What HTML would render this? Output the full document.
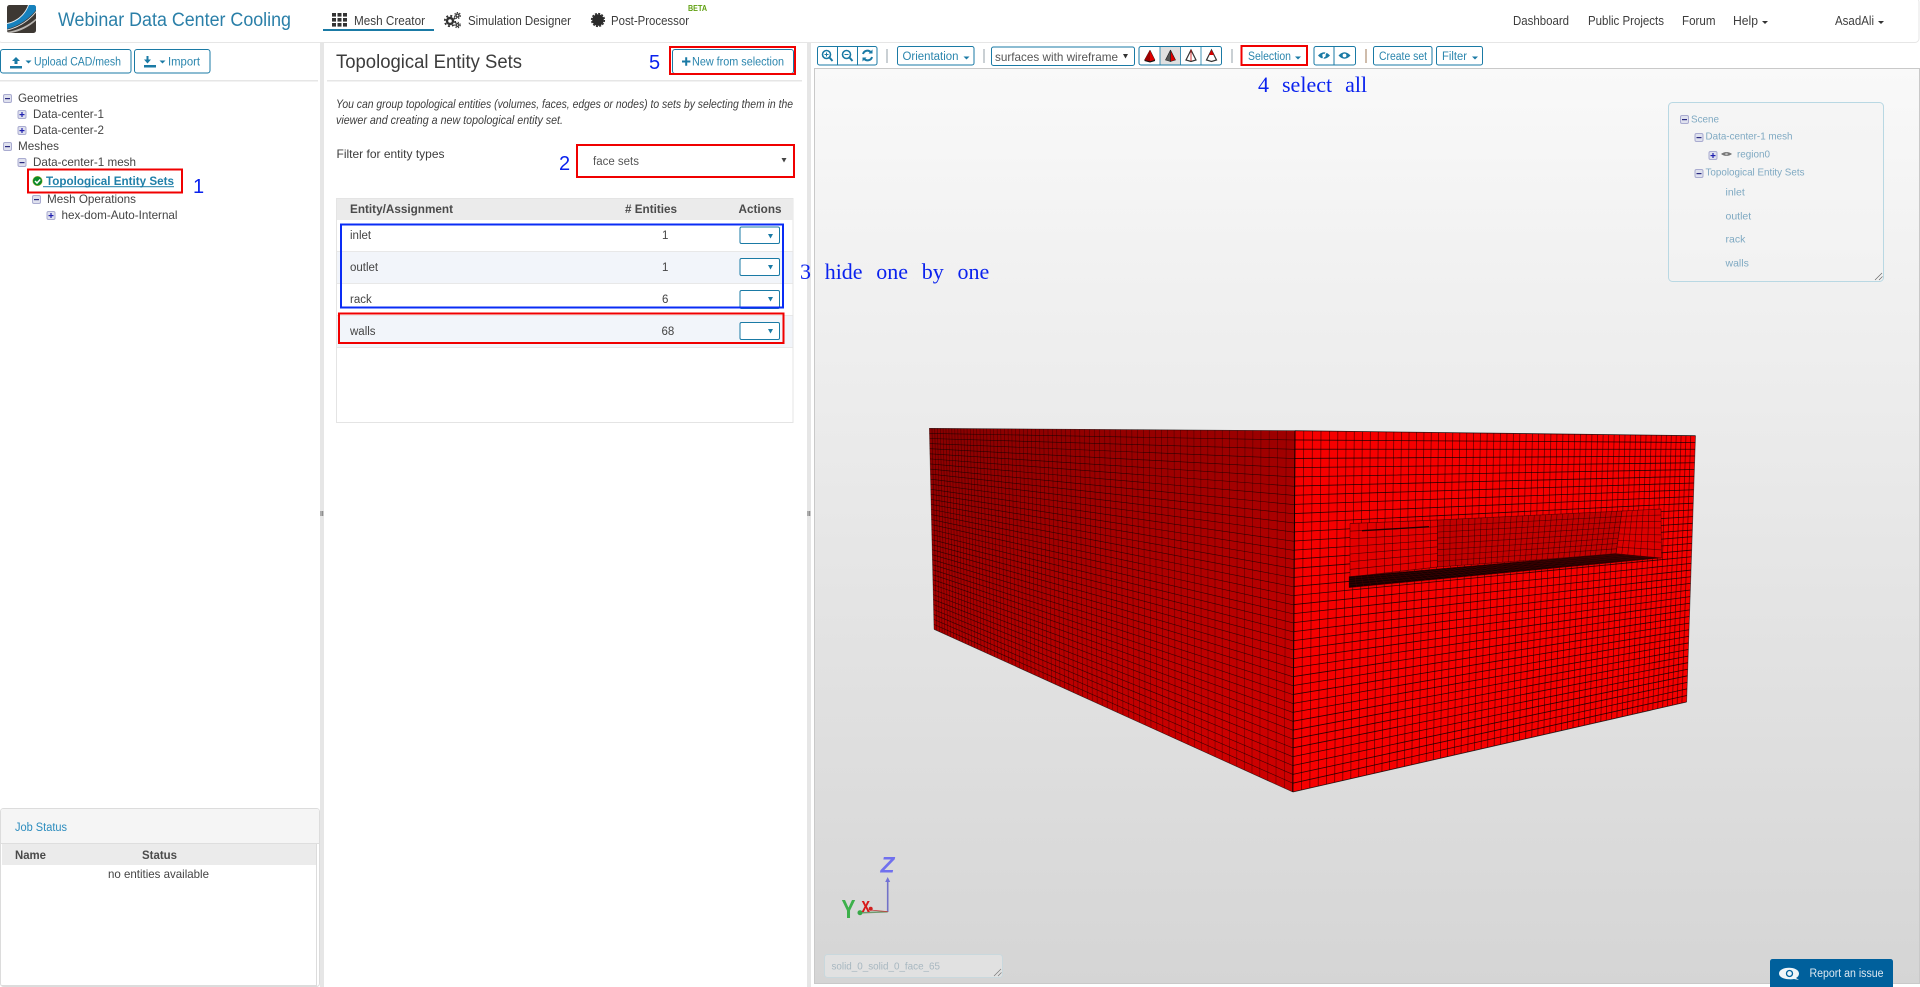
<!DOCTYPE html>
<html lang="en">
<head>
<meta charset="utf-8">
<title>Webinar Data Center Cooling</title>
<style>
html,body{margin:0;padding:0;background:#fff;width:1920px;height:987px;overflow:hidden}
svg{display:block}
text{font-family:"Liberation Sans",Arial,sans-serif;font-size:12px;fill:#3a3a3a}
.nav{font-size:12.5px;fill:#3d3d3d}
.title{font-size:19px;fill:#2a7fa8}
.btn{font-size:11.5px;fill:#2a85ad}
.tree{font-size:12px;fill:#444}
.th{font-size:11.5px;font-weight:bold;fill:#4a4a4a}
.td{font-size:11.5px;fill:#444}
.sc{font-size:10.5px;fill:#7fa9c2}
.ann{font-size:20px;fill:#0a22ee}
.ser{font-family:"Liberation Serif",serif;font-size:22px;fill:#0a22ee}
.b{fill:#fff;stroke:#1a7aa5;stroke-width:1}
.sep{stroke:#b9c0c6;stroke-width:1.5}
.red{fill:none;stroke:#f00000;stroke-width:2}
.blue{fill:none;stroke:#0a2cf5;stroke-width:2}
.ic{fill:#1a7aa5}
.ics{fill:none;stroke:#1a7aa5;stroke-width:1.6}
</style>
</head>
<body>
<svg id="page" xmlns="http://www.w3.org/2000/svg" width="1920" height="987" viewBox="0 0 1920 987">
<defs>
<linearGradient id="vg" x1="0" y1="0" x2="0" y2="1"><stop offset="0" stop-color="#f9f9f9"/><stop offset="1" stop-color="#d5d5d5"/></linearGradient>
<linearGradient id="lf" x1="0" y1="0" x2="0.35" y2="1"><stop offset="0" stop-color="#880000"/><stop offset="1" stop-color="#cc0000"/></linearGradient>
<g id="minus"><rect x="0.5" y="0.5" width="8" height="8" rx="1.5" fill="#dfe1ee" stroke="#a9abd0"/><rect x="2" y="4" width="5" height="1.2" fill="#2a2a80"/></g>
<g id="plus"><rect x="0.5" y="0.5" width="8" height="8" rx="1.5" fill="#dfe1ee" stroke="#a9abd0"/><rect x="2" y="4" width="5" height="1.2" fill="#2222b0"/><rect x="3.9" y="2" width="1.2" height="5" fill="#2222b0"/></g>
<path id="caret" d="M0 0h6l-3 3z"/>
<path id="drop" d="M0 0h5l-2.5 4.5z"/>
<clipPath id="logoclip"><rect x="7" y="5" width="29" height="28" rx="2.5"/></clipPath>
</defs>

<!-- navbar -->
<rect x="-2" y="-2" width="1921" height="44.5" rx="4" fill="#fff" stroke="#e6e6e6"/>
<g clip-path="url(#logoclip)">
<rect x="7" y="5" width="29" height="28" fill="#3d3833"/>
<path d="M7 23C15 21.500 24 16 28 5H30C26 17 16 23 7 24.500Z" fill="#e8eef2"/>
<path d="M7 24C16 22.500 25 16 29 5H36V10C30 18 19 26 7 29Z" fill="#1681bd"/>
<path d="M7 29.500C19 27 30 19 36 11V12.500C30 20 19 28 7 30.500Z" fill="#d8dde0"/>
<path d="M7 32C18 30.500 29 25 36 18.500V20.500C29 27 20 31.500 11 33H7Z" fill="#b9b6b2"/>
</g>
<text class="title" x="58" y="26" textLength="233" lengthAdjust="spacingAndGlyphs">Webinar Data Center Cooling</text>
<g fill="#333">
<rect x="332" y="13" width="4" height="3.6"/><rect x="337.5" y="13" width="4" height="3.6"/><rect x="343" y="13" width="4" height="3.6"/>
<rect x="332" y="18" width="4" height="3.6"/><rect x="337.5" y="18" width="4" height="3.6"/><rect x="343" y="18" width="4" height="3.6"/>
<rect x="332" y="23" width="4" height="3.6"/><rect x="337.5" y="23" width="4" height="3.6"/><rect x="343" y="23" width="4" height="3.6"/>
</g>
<text class="nav" x="354" y="25" textLength="71" lengthAdjust="spacingAndGlyphs">Mesh Creator</text>
<rect x="323" y="29" width="111" height="2" fill="#1a7aa5"/>
<g fill="none" stroke="#333">
<circle cx="450" cy="21" r="3" stroke-width="2.4"/><circle cx="450" cy="21" r="5.2" stroke-width="1.8" stroke-dasharray="2 2.1"/>
<circle cx="457.5" cy="15.5" r="1.6" stroke-width="1.4"/><circle cx="457.5" cy="15.5" r="3" stroke-width="1.1" stroke-dasharray="1.3 1.3"/>
<circle cx="457.5" cy="25" r="1.4" stroke-width="1.3"/><circle cx="457.5" cy="25" r="2.8" stroke-width="1" stroke-dasharray="1.3 1.3"/>
</g>
<text class="nav" x="468" y="25" textLength="103" lengthAdjust="spacingAndGlyphs">Simulation Designer</text>
<circle cx="598" cy="20" r="5.8" fill="#2a2a2a"/><circle cx="598" cy="20" r="6.4" fill="none" stroke="#2a2a2a" stroke-width="1.4" stroke-dasharray="2 1.35"/>
<text class="nav" x="611" y="25" textLength="78" lengthAdjust="spacingAndGlyphs">Post-Processor</text>
<text x="688" y="11" textLength="19" lengthAdjust="spacingAndGlyphs" style="font-size:8px;font-weight:bold;fill:#5fa010">BETA</text>
<text class="nav" x="1513" y="25" textLength="56" lengthAdjust="spacingAndGlyphs">Dashboard</text>
<text class="nav" x="1588" y="25" textLength="76" lengthAdjust="spacingAndGlyphs">Public Projects</text>
<text class="nav" x="1682" y="25" textLength="33.500" lengthAdjust="spacingAndGlyphs">Forum</text>
<text class="nav" x="1733" y="25" textLength="25" lengthAdjust="spacingAndGlyphs">Help</text>
<use href="#caret" x="1762" y="21" fill="#333"/>
<text class="nav" x="1835" y="25" textLength="39" lengthAdjust="spacingAndGlyphs">AsadAli</text>
<use href="#caret" x="1878" y="21" fill="#333"/>

<!-- dividers -->
<rect x="320" y="43" width="4" height="944" fill="#e6e6e6"/>
<rect x="807" y="43" width="4" height="944" fill="#e6e6e6"/>
<g stroke="#555" stroke-width="0.8"><path d="M321 511v5M322.800 511v5M808 511v5M809.800 511v5"/></g>

<!-- left panel -->
<rect x="0.500" y="49.500" width="130.500" height="23.500" rx="2.500" class="b"/>
<rect x="134.500" y="49.500" width="75.500" height="23.500" rx="2.500" class="b"/>
<g class="ic">
<path d="M16 57l4 4h-2.500v3h-3v-3H12zM10 66h12v2.500H10z"/>
<use href="#caret" x="25.500" y="60.500"/>
<path d="M148.500 56v3.500H151l-3.500 4-3.500-4h2.500V56zM144 65h12v2.500h-12z" />
<use href="#caret" x="159.500" y="60.500"/>
</g>
<text class="btn" x="34" y="65.500" textLength="87" lengthAdjust="spacingAndGlyphs">Upload CAD/mesh</text>
<text class="btn" x="168" y="65.500" textLength="32" lengthAdjust="spacingAndGlyphs">Import</text>
<rect x="0" y="80" width="318" height="1.500" fill="#e6e6e6"/>

<use href="#minus" x="3" y="94"/><text class="tree" x="18" y="102" textLength="60" lengthAdjust="spacingAndGlyphs">Geometries</text>
<use href="#plus" x="17.500" y="110"/><text class="tree" x="33" y="118" textLength="71" lengthAdjust="spacingAndGlyphs">Data-center-1</text>
<use href="#plus" x="17.500" y="126"/><text class="tree" x="33" y="134" textLength="71" lengthAdjust="spacingAndGlyphs">Data-center-2</text>
<use href="#minus" x="3" y="142"/><text class="tree" x="18" y="150" textLength="41" lengthAdjust="spacingAndGlyphs">Meshes</text>
<use href="#minus" x="17.500" y="158"/><text class="tree" x="33" y="166" textLength="103" lengthAdjust="spacingAndGlyphs">Data-center-1 mesh</text>
<circle cx="37.500" cy="181" r="4.800" fill="#0b8a2a" stroke="#c9c040" stroke-width="0.500"/>
<path d="M35 181l2 2 3.200-3.500" fill="none" stroke="#fff" stroke-width="1.500"/>
<text x="46" y="185" textLength="128" lengthAdjust="spacingAndGlyphs" style="font-size:12px;font-weight:bold;fill:#1f7fa8">Topological Entity Sets</text>
<rect x="43" y="186.200" width="131" height="1" fill="#1f7fa8"/>
<rect x="28" y="169.500" width="154" height="23" class="red"/>
<text class="ann" x="193" y="193">1</text>
<use href="#minus" x="32" y="195"/><text class="tree" x="47" y="203" textLength="89" lengthAdjust="spacingAndGlyphs">Mesh Operations</text>
<use href="#plus" x="46.500" y="211"/><text class="tree" x="61.500" y="219" textLength="116" lengthAdjust="spacingAndGlyphs">hex-dom-Auto-Internal</text>

<!-- job status -->
<rect x="0.500" y="808.500" width="319" height="178" rx="3" fill="#fff" stroke="#dcdcdc"/>
<path d="M1 811a2 2 0 0 1 2-2h314a2 2 0 0 1 2 2v32H1z" fill="#f5f5f5"/>
<rect x="1" y="843" width="318" height="1" fill="#dedede"/>
<rect x="2" y="844" width="314" height="21" fill="#ebebeb"/>
<rect x="316" y="844" width="1" height="141" fill="#dcdcdc"/>
<rect x="2" y="985" width="315" height="1" fill="#dcdcdc"/>
<text x="15" y="831" textLength="52" lengthAdjust="spacingAndGlyphs" style="font-size:11.500px;fill:#2b8cbe">Job Status</text>
<text class="th" x="15" y="859" textLength="31" lengthAdjust="spacingAndGlyphs">Name</text>
<text class="th" x="142" y="859" textLength="35" lengthAdjust="spacingAndGlyphs">Status</text>
<text x="108" y="878" textLength="101" lengthAdjust="spacingAndGlyphs" style="font-size:12px;fill:#444">no entities available</text>

<!-- middle panel -->
<text x="336" y="68" textLength="186" lengthAdjust="spacingAndGlyphs" style="font-size:19px;fill:#3c3c3c">Topological Entity Sets</text>
<rect x="327" y="80" width="475" height="1.500" fill="#e6e6e6"/>
<text class="ann" x="649" y="69">5</text>
<rect x="672.500" y="49.500" width="121" height="24" rx="2.500" class="b"/>
<path d="M682 60.500h3.200v-3.200h2v3.200h3.200v2h-3.200v3.200h-2v-3.200H682z" class="ic"/>
<text class="btn" x="692" y="65.500" textLength="92" lengthAdjust="spacingAndGlyphs">New from selection</text>
<rect x="670" y="47" width="125" height="27" class="red"/>
<text x="336" y="108" textLength="457" lengthAdjust="spacingAndGlyphs" style="font-size:12px;font-style:italic;fill:#3c3c3c">You can group topological entities (volumes, faces, edges or nodes) to sets by selecting them in the</text>
<text x="336" y="124" textLength="227" lengthAdjust="spacingAndGlyphs" style="font-size:12px;font-style:italic;fill:#3c3c3c">viewer and creating a new topological entity set.</text>
<text x="336.500" y="158" textLength="108" lengthAdjust="spacingAndGlyphs" style="font-size:12px;fill:#3c3c3c">Filter for entity types</text>
<text class="ann" x="559" y="170">2</text>
<rect x="577" y="145" width="217" height="32" class="red"/>
<text x="593" y="165" textLength="46" lengthAdjust="spacingAndGlyphs" style="font-size:11.500px;fill:#555">face sets</text>
<use href="#drop" x="781.500" y="158" fill="#444"/>

<rect x="336.500" y="198.500" width="456.500" height="224" fill="#fff" stroke="#e4e4e4"/>
<rect x="337" y="199" width="456" height="21" fill="#ebebeb"/>
<rect x="337" y="252" width="455.500" height="31" fill="#f2f5fa"/>
<rect x="337" y="316" width="455.500" height="31" fill="#f2f5fa"/>
<g fill="#e8e8e8"><rect x="337" y="251" width="455.500" height="1"/><rect x="337" y="283" width="455.500" height="1"/><rect x="337" y="315" width="455.500" height="1"/><rect x="337" y="347" width="455.500" height="1"/></g>
<text class="th" x="350" y="213" textLength="103" lengthAdjust="spacingAndGlyphs">Entity/Assignment</text>
<text class="th" x="625" y="213" textLength="52" lengthAdjust="spacingAndGlyphs"># Entities</text>
<text class="th" x="738.500" y="213" textLength="43" lengthAdjust="spacingAndGlyphs">Actions</text>
<text class="td" x="350" y="239">inlet</text><text class="td" x="662" y="239">1</text>
<text class="td" x="350" y="271">outlet</text><text class="td" x="662" y="271">1</text>
<text class="td" x="350" y="303">rack</text><text class="td" x="662" y="303">6</text>
<text class="td" x="350" y="335">walls</text><text class="td" x="661.500" y="335">68</text>
<g>
<rect x="740" y="227" width="39.500" height="16.500" rx="1.500" class="b"/><rect x="740" y="258.500" width="39.500" height="17" rx="1.500" class="b"/><rect x="740" y="290.500" width="39.500" height="18" rx="1.500" class="b"/><rect x="740" y="322.500" width="39.500" height="17" rx="1.500" class="b"/>
<g class="ic"><use href="#drop" x="768" y="234"/><use href="#drop" x="768" y="265"/><use href="#drop" x="768" y="297"/><use href="#drop" x="768" y="329"/></g>
</g>
<rect x="341" y="224.500" width="442" height="83" class="blue"/>
<rect x="339" y="313.500" width="444.500" height="29.500" class="red"/>

<!-- toolbar -->
<rect x="817.500" y="46.500" width="59.500" height="18.500" rx="2" class="b"/>
<path d="M837.500 46.500v18.500M857.500 46.500v18.500" stroke="#1a7aa5"/>
<g class="ics">
<circle cx="826.500" cy="54.500" r="4"/><path d="M829.500 57.500l3 3.500" stroke-width="2"/><path d="M824.500 54.500h4M826.500 52.500v4" stroke-width="1"/>
<circle cx="846.500" cy="54.500" r="4"/><path d="M849.500 57.500l3 3.500" stroke-width="2"/><path d="M844.500 54.500h4" stroke-width="1"/>
<path d="M863 54a4.500 4.500 0 0 1 8-1.500M872 57a4.500 4.500 0 0 1-8 1.500" stroke-width="2"/>
</g>
<path d="M872.500 49.500v4h-4zM862.500 61.500v-4h4z" class="ic"/>
<path class="sep" d="M887 49v14M984 49v14M1232 49v14"/>
<path d="M1366 49v14" stroke="#bfa68f" stroke-width="1.500"/>
<rect x="897.500" y="46.500" width="76.500" height="18.500" rx="2" class="b"/>
<text class="btn" x="902.500" y="60" textLength="56" lengthAdjust="spacingAndGlyphs">Orientation</text>
<use href="#caret" x="963.500" y="56.500" class="ic"/>
<rect x="991.500" y="47" width="143" height="18.500" rx="2" class="b"/>
<text x="995" y="61" textLength="123" lengthAdjust="spacingAndGlyphs" style="font-size:12px;fill:#555">surfaces with wireframe</text>
<use href="#drop" x="1123" y="54" fill="#333"/>
<rect x="1139" y="46.500" width="82.500" height="18.500" rx="2" class="b"/>
<rect x="1160" y="47" width="20.500" height="17.500" fill="#e0e0e0"/>
<path d="M1160 46.500v18.500M1180.500 46.500v18.500M1201 46.500v18.500" stroke="#1a7aa5" stroke-width="0.800"/>
<path d="M1150 50l5 10-5 1.500-5.500-1.500z" fill="#e00000" stroke="#222" stroke-width="0.500"/><path d="M1150 50l-5.500 10 5.500 1.500z" fill="#a00000"/><path d="M1144.500 60.500l5.500 1.500 5-1.500" fill="none" stroke="#111" stroke-width="1"/>
<path d="M1170.500 50l5 10-5 1.500z" fill="#e00000" stroke="#222" stroke-width="0.600"/><path d="M1170.500 50l-5 10 5 1.500z" fill="#555" stroke="#222" stroke-width="0.600"/>
<path d="M1191 50l5 10-5 1.500-5-1.500z" fill="#fff" stroke="#333" stroke-width="1.200"/><path d="M1191 50v11" stroke="#c00" stroke-width="0.800"/>
<path d="M1211.500 50l5 10-5 1.500-5-1.500z" fill="#fff" stroke="#333" stroke-width="1.200"/><path d="M1211.500 50l2.500 5h-5z" fill="#d80000"/>
<rect x="1241.500" y="46" width="65.500" height="19" class="red"/>
<text class="btn" x="1248" y="60" textLength="43" lengthAdjust="spacingAndGlyphs">Selection</text>
<use href="#caret" x="1295" y="56.500" class="ic"/>
<rect x="1314" y="46.500" width="41.500" height="18.500" rx="2" class="b"/>
<path d="M1334 46.500v18.500" stroke="#1a7aa5"/>
<path d="M1318 55.500q6-6.500 12 0q-6 6.500-12 0z" class="ic"/><circle cx="1324" cy="55.500" r="1.700" fill="#fff"/><path d="M1327.500 50l-6 11" stroke="#fff" stroke-width="1.200"/>
<path d="M1338.500 55.500q6-6.500 12 0q-6 6.500-12 0z" class="ic"/><circle cx="1344.500" cy="55.500" r="1.900" fill="#fff"/>
<rect x="1373.500" y="46.500" width="58.500" height="18.500" rx="2" class="b"/>
<text class="btn" x="1379" y="60" textLength="48" lengthAdjust="spacingAndGlyphs">Create set</text>
<rect x="1436.500" y="46.500" width="46" height="18.500" rx="2" class="b"/>
<text class="btn" x="1442" y="60" textLength="25" lengthAdjust="spacingAndGlyphs">Filter</text>
<use href="#caret" x="1472" y="56.500" class="ic"/>

<!-- viewer -->
<rect x="814.500" y="68.500" width="1105" height="915" fill="url(#vg)" stroke="#c9c9c9"/>
<text class="ser" x="1258" y="92" style="word-spacing:7.500px">4 select all</text>
<text class="ser" x="800" y="279" style="word-spacing:8.200px">3 hide one by one</text>
<g id="mesh">
<polygon points="929.300,428.300 1295,430.700 1292.800,792 934,629.300" fill="url(#lf)"/>
<polygon points="1295,430.700 1695.500,435.700 1686.600,702 1292.800,792" fill="#f60000"/>
</g>

<!-- scene tree -->
<rect x="1668.500" y="102.500" width="215" height="179" rx="4" fill="#f4f4f4" fill-opacity="0.6" stroke="#b9d8e3"/>
<use href="#minus" x="1680" y="115"/><text class="sc" x="1691" y="122.500" textLength="28" lengthAdjust="spacingAndGlyphs">Scene</text>
<use href="#minus" x="1694.500" y="133"/><text class="sc" x="1705.500" y="139.500" textLength="87" lengthAdjust="spacingAndGlyphs">Data-center-1 mesh</text>
<use href="#plus" x="1708.500" y="151"/>
<path d="M1721 154q5.500-4 11 0q-5.500 4-11 0z" fill="#777"/><circle cx="1726.500" cy="154" r="1.300" fill="#bbb"/>
<text class="sc" x="1737" y="157.500" textLength="33" lengthAdjust="spacingAndGlyphs">region0</text>
<use href="#minus" x="1694.500" y="169"/><text class="sc" x="1705.500" y="175.500" textLength="99" lengthAdjust="spacingAndGlyphs">Topological Entity Sets</text>
<text class="sc" x="1725.500" y="195.500">inlet</text>
<text class="sc" x="1725.500" y="219.500">outlet</text>
<text class="sc" x="1725.500" y="242.500">rack</text>
<text class="sc" x="1725.500" y="266.500">walls</text>
<path d="M1875 280l7-7M1879 280l3.500-3.500" stroke="#666" stroke-width="0.700"/>

<!-- axes -->
<path d="M887.700 912V881" stroke="#7272c8" stroke-width="1.600" fill="none"/>
<path d="M887.700 877l2.500 5h-5z" fill="#7272d8"/>
<path d="M887.700 911.700L862 912.700" stroke="#6f9a6f" stroke-width="1.500"/>
<path d="M887.700 911.700L870 910" stroke="#c04040" stroke-width="0.800"/>
<circle cx="860" cy="912.700" r="2.500" fill="#38a848"/><circle cx="870.700" cy="908.700" r="2" fill="#d02020"/>
<text x="880.500" y="872.700" textLength="14" lengthAdjust="spacingAndGlyphs" style="font-size:22px;font-weight:bold;font-style:italic;fill:#7070ee">Z</text>
<text x="841.500" y="918" textLength="14" lengthAdjust="spacingAndGlyphs" style="font-size:26px;font-weight:bold;fill:#3cb04a">Y</text>
<text x="861.500" y="912" textLength="8.500" lengthAdjust="spacingAndGlyphs" style="font-size:20px;font-weight:bold;fill:#d81a1a">x</text>

<!-- hover label -->
<rect x="824.500" y="954.500" width="178" height="23" rx="3" fill="#e1e1e1" stroke="#c9d8dd"/>
<text x="831.500" y="969.500" textLength="108.500" lengthAdjust="spacingAndGlyphs" style="font-size:10.500px;fill:#a7b7c0">solid_0_solid_0_face_65</text>
<path d="M994 976l7-7M998 976l3.500-3.500" stroke="#777" stroke-width="0.700"/>

<!-- report -->
<path d="M1770 987v-25.500a2.500 2.500 0 0 1 2.500-2.500h118a2.500 2.500 0 0 1 2.500 2.500V987z" fill="#00609c"/>
<path d="M1779 973.500c0-3.500 4.500-5.800 10-5.800s10 2.300 10 5.800c0 2-1 3.500-3 4.500l3 2-5-1c-1.500.3-3.300.4-5 .3-5.500-.3-10-2.300-10-5.800z" fill="#f0f5f9"/>
<circle cx="1789.500" cy="973.500" r="3" fill="none" stroke="#00609c" stroke-width="1.300"/>
<text x="1809.500" y="977" textLength="74" lengthAdjust="spacingAndGlyphs" style="font-size:11.500px;fill:#dce8f1">Report an issue</text>
</svg>
<script>
(function(){
var NS="http://www.w3.org/2000/svg",g=document.getElementById("mesh");
function H(q){
 var x0=q[0][0],y0=q[0][1],x1=q[1][0],y1=q[1][1],x2=q[2][0],y2=q[2][1],x3=q[3][0],y3=q[3][1];
 var dx1=x1-x2,dx2=x3-x2,sx=x0-x1+x2-x3,dy1=y1-y2,dy2=y3-y2,sy=y0-y1+y2-y3;
 var den=dx1*dy2-dx2*dy1,gg=(sx*dy2-dx2*sy)/den,h=(dx1*sy-sx*dy1)/den;
 var a=x1-x0+gg*x1,b=x3-x0+h*x3,d=y1-y0+gg*y1,e=y3-y0+h*y3;
 return function(u,v){var w=gg*u+h*v+1;return ((a*u+b*v+x0)/w).toFixed(2)+" "+((d*u+e*v+y0)/w).toFixed(2);};
}
function poly(q,fill){
 var p=document.createElementNS(NS,"polygon");
 p.setAttribute("points",q.map(function(c){return c.join(",");}).join(" "));
 p.setAttribute("fill",fill);g.appendChild(p);
}
function stroke(s,color,w,op){
 var p=document.createElementNS(NS,"path");
 p.setAttribute("d",s);p.setAttribute("fill","none");p.setAttribute("stroke",color);
 p.setAttribute("stroke-width",w);p.setAttribute("stroke-opacity",op);g.appendChild(p);
}
function grid(q,cols,rows,color,w,opV,opH){
 var f=H(q),s="",t="",i;
 for(i=0;i<=cols;i++){s+="M"+f(i/cols,0)+"L"+f(i/cols,1);}
 for(i=0;i<=rows;i++){t+="M"+f(0,i/rows)+"L"+f(1,i/rows);}
 stroke(s,color,w,opV);stroke(t,color,w,opH);
}
grid([[929.3,428.3],[1295,430.7],[1292.8,792],[934,629.3]],75,40,"#000",0.6,0.45,0.7);
grid([[1295,430.7],[1695.5,435.7],[1686.6,702],[1292.8,792]],62,40,"#000",0.8,0.55,0.8);
var L=[[1350,523.5],[1437.5,520],[1437.5,567],[1350,577]];
poly(L,"#e40000");grid(L,11,7,"#000",0.7,0.5,0.6);
var B=[[1437.5,520],[1622,511],[1616,554],[1437.5,567]];
poly(B,"#c20000");grid(B,32,8,"#000",0.7,0.5,0.5);
var R=[[1622,511],[1661,509],[1661.5,558],[1616,554]];
poly(R,"#dc0000");grid(R,7,7,"#000",0.7,0.5,0.5);
var F=[[1349,576.5],[1615,553.5],[1661.5,558],[1349,587.7]];
poly(F,"#170000");grid(F,55,5,"#5a0000",0.5,0.6,0.6);
stroke("M1295 430.7L1292.8 792","#000",1,0.8);
var l=document.createElementNS(NS,"path");
l.setAttribute("d","M1362 530.7L1429 526.7");l.setAttribute("stroke","#200000");l.setAttribute("stroke-width","1.3");g.appendChild(l);
})();
</script>
</body>
</html>
